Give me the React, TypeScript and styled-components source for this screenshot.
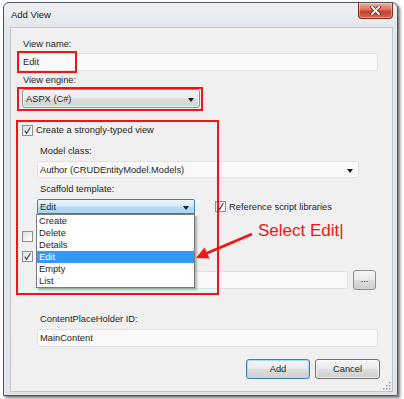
import React from "react";
import styled, { createGlobalStyle, css } from "styled-components";

const GlobalStyle = createGlobalStyle`
  html, body { margin: 0; padding: 0; background: #ffffff; }
  body { font-family: "Liberation Sans", Arial, sans-serif; }
  * { box-sizing: border-box; }
`;

const UI_FONT = `"Liberation Sans", Arial, sans-serif`;
const RED = "#f41414";

const Desktop = styled.div`
  width: 404px;
  height: 399px;
  padding: 2px 0 0 3px;
  overflow: hidden;
  background: #ffffff;
`;

const Window = styled.div`
  width: 395px;
  height: 394px;
  display: flex;
  flex-direction: column;
  border: 1px solid #50555c;
  border-radius: 6px 6px 0 0;
  background: linear-gradient(180deg, #eef1f4 0px, #e4e8ec 24px, #e1e5ea 100%);
  box-shadow: 2px 2px 3px rgba(0, 0, 0, 0.55);
`;

const TitleBar = styled.div`
  height: 24px;
  flex: none;
  display: flex;
  align-items: flex-start;
  justify-content: space-between;
  padding: 0 4px 0 7px;
`;

const Title = styled.span`
  font-family: ${UI_FONT};
  font-size: 9.5px;
  line-height: 24px;
  color: #1a1a1a;
`;

const CloseButton = styled.div`
  width: 35px;
  height: 16px;
  display: flex;
  align-items: center;
  justify-content: center;
  border: 1px solid #7a3020;
  border-top: none;
  border-radius: 0 0 4px 4px;
  background: linear-gradient(180deg, #eab3a4 0%, #d8735c 45%, #c4402a 55%, #d9644a 100%);
  box-shadow: inset 0 0 0 1px rgba(255, 255, 255, 0.35);
`;

const Client = styled.div`
  position: relative;
  flex: 1;
  margin: 0 4px 3px 6px;
  padding: 9px 14px 0 7px;
  border: 1px solid #bcc5ce;
  background: #f0f0f0;
  font-family: ${UI_FONT};
  font-size: 9.3px;
  color: #1e1e1e;
  display: flex;
  flex-direction: column;
`;

const Label = styled.div<{ $top?: number }>`
  height: 14px;
  line-height: 14px;
  padding-left: 5px;
  margin-top: ${(p) => p.$top ?? 0}px;
  white-space: nowrap;
`;

const IndentLabel = styled(Label)`
  padding-left: 3px;
`;

const TextBox = styled.div<{ $top?: number; $width?: number }>`
  height: 18px;
  line-height: 16px;
  margin-top: ${(p) => p.$top ?? 0}px;
  width: ${(p) => (p.$width ? `${p.$width}px` : "auto")};
  padding-left: 4px;
  border: 1px solid #dfe1e4;
  border-radius: 2px;
  background: #f9f9f9;
  white-space: nowrap;
`;

const IndentTextBox = styled(TextBox)`
  padding-left: 2px;
`;

type ComboVariant = "button" | "flat" | "focused";

const comboVariants: Record<ComboVariant, ReturnType<typeof css>> = {
  button: css`
    border: 1px solid #8b8c8d;
    border-radius: 3px;
    background: linear-gradient(180deg, #f4f4f4 0%, #ebebeb 48%, #dddddd 52%, #d2d2d2 100%);
    box-shadow: inset 0 0 0 1px rgba(255, 255, 255, 0.7);
    padding-left: 3px;
  `,
  flat: css`
    border: 1px solid #dfe1e4;
    border-radius: 2px;
    background: #f9f9f9;
    padding-left: 2px;
  `,
  focused: css`
    border: 1px solid #3c7fb1;
    border-radius: 2px 2px 0 0;
    background: linear-gradient(180deg, #eef7fe 0%, #d6ecfb 45%, #b5dcf6 55%, #a9d5f3 100%);
    padding-left: 2px;
  `,
};

const Combo = styled.div<{ $variant: ComboVariant; $width: number; $height: number; $top?: number; $left?: number }>`
  position: relative;
  display: flex;
  align-items: center;
  flex: none;
  width: ${(p) => p.$width}px;
  height: ${(p) => p.$height}px;
  margin-top: ${(p) => p.$top ?? 0}px;
  margin-left: ${(p) => p.$left ?? 0}px;
  white-space: nowrap;
  ${(p) => comboVariants[p.$variant]}
`;

const DropArrow = styled.span`
  position: absolute;
  right: 5px;
  top: 50%;
  margin-top: -1px;
  width: 0;
  height: 0;
  border-left: 3.5px solid transparent;
  border-right: 3.5px solid transparent;
  border-top: 4px solid #1a1a1a;
`;

const CheckRow = styled.div<{ $top?: number; $left?: number }>`
  display: flex;
  align-items: center;
  gap: 3px;
  height: 14px;
  margin-top: ${(p) => p.$top ?? 0}px;
  margin-left: ${(p) => p.$left ?? 0}px;
  white-space: nowrap;
`;

const CheckBoxFrame = styled.span`
  width: 11px;
  height: 11px;
  flex: none;
  display: flex;
  align-items: center;
  justify-content: center;
  border: 1px solid #8e8f90;
  background: linear-gradient(135deg, #d9dcdf 0%, #f4f4f4 60%, #ffffff 100%);
`;

const CheckBox: React.FC<{ checked?: boolean }> = ({ checked }) => (
  <CheckBoxFrame>
    {checked && (
      <svg width="9" height="9" viewBox="0 0 9 9">
        <path d="M1.8 4.6 L3.6 7.4 L7.4 1.2" fill="none" stroke="#2c3f6b" strokeWidth="1.1" />
      </svg>
    )}
  </CheckBoxFrame>
);

const HiddenMark = styled.span`
  width: 2px;
  height: 6px;
  background: #b07a40;
  opacity: 0.7;
`;

const Indented = styled.div`
  margin-left: 19px;
  display: flex;
  flex-direction: column;
`;

const ScaffoldRow = styled.div`
  position: relative;
  display: flex;
  align-items: center;
  margin-top: 3px;
  gap: 20px;
  z-index: 2;
`;

const ScaffoldCombo = styled.div`
  position: relative;
`;

const DropList = styled.div`
  position: absolute;
  left: -1px;
  top: 100%;
  width: 159px;
  height: 74px;
  background: #ffffff;
  border: 1px solid #7a7a7a;
  box-shadow: 2px 2px 2px rgba(0, 0, 0, 0.28);
  display: flex;
  flex-direction: column;
`;

const DropItem = styled.div<{ $selected?: boolean }>`
  height: 12px;
  line-height: 12px;
  padding-left: 2px;
  background: ${(p) => (p.$selected ? "#3399ff" : "transparent")};
  color: ${(p) => (p.$selected ? "#ffffff" : "#1e1e1e")};
`;

const BrowseRow = styled.div`
  display: flex;
  align-items: center;
  gap: 5px;
  height: 20px;
  margin-top: 7px;
`;

const BrowseButton = styled.div`
  width: 23px;
  height: 20px;
  display: flex;
  align-items: center;
  justify-content: center;
  border: 1px solid #8e8f90;
  border-radius: 3px;
  background: linear-gradient(180deg, #f4f4f4 0%, #ebebeb 48%, #dddddd 52%, #d0d0d0 100%);
  font-size: 9px;
  padding-bottom: 3px;
`;

const ButtonRow = styled.div`
  display: flex;
  justify-content: flex-end;
  gap: 5px;
  margin-top: 12px;
  margin-right: -2px;
`;

const DialogButton = styled.div<{ $default?: boolean; $width: number }>`
  width: ${(p) => p.$width}px;
  height: 20px;
  display: flex;
  align-items: center;
  justify-content: center;
  border-radius: 3px;
  border: 1px solid ${(p) => (p.$default ? "#3c7fb1" : "#707070")};
  background: linear-gradient(180deg, #f4f4f4 0%, #ebebeb 48%, #dddddd 52%, #cfcfcf 100%);
  box-shadow: ${(p) => (p.$default ? "inset 0 0 0 1px #a6dbf6" : "inset 0 0 0 1px rgba(255,255,255,0.7)")};
`;

const RedBox = styled.div<{ $left: number; $top: number; $w: number; $h: number }>`
  position: absolute;
  left: ${(p) => p.$left}px;
  top: ${(p) => p.$top}px;
  width: ${(p) => p.$w}px;
  height: ${(p) => p.$h}px;
  border: 2px solid ${RED};
  pointer-events: none;
  z-index: 5;
`;

const Callout = styled.div`
  position: absolute;
  left: 247px;
  top: 193px;
  font-family: "Liberation Sans", Arial, sans-serif;
  font-size: 17px;
  line-height: 20px;
  color: ${RED};
  white-space: nowrap;
  z-index: 6;
`;

const ArrowSvg = styled.svg`
  position: absolute;
  left: 180px;
  top: 195px;
  z-index: 6;
  overflow: visible;
`;

const Grip = styled.svg`
  position: absolute;
  right: 1px;
  bottom: 1px;
`;

export default function App() {
  return (
    <>
      <GlobalStyle />
      <Desktop>
        <Window>
          <TitleBar>
            <Title>Add View</Title>
            <CloseButton>
              <svg width="11" height="9" viewBox="0 0 11 9">
                <path d="M2 1 L9 8 M9 1 L2 8" stroke="#5a2216" strokeWidth="3.4" strokeLinecap="square" />
                <path d="M2 1 L9 8 M9 1 L2 8" stroke="#ffffff" strokeWidth="1.8" strokeLinecap="square" />
              </svg>
            </CloseButton>
          </TitleBar>
          <Client>
            <Label>View name:</Label>
            <TextBox $top={2}>Edit</TextBox>
            <Label $top={2}>View engine:</Label>
            <Combo $variant="button" $width={178} $height={19} $top={2} $left={4}>
              ASPX (C#)
              <DropArrow />
            </Combo>
            <CheckRow $top={15} $left={4}>
              <CheckBox checked />
              Create a strongly-typed view
            </CheckRow>
            <Indented>
              <IndentLabel $top={7}>Model class:</IndentLabel>
              <Combo $variant="flat" $width={322} $height={17} $top={3}>
                Author (CRUDEntityModel.Models)
                <DropArrow />
              </Combo>
              <IndentLabel $top={4}>Scaffold template:</IndentLabel>
              <ScaffoldRow>
                <ScaffoldCombo>
                  <Combo $variant="focused" $width={158} $height={15}>
                    Edit
                    <DropArrow />
                  </Combo>
                  <DropList>
                    <DropItem>Create</DropItem>
                    <DropItem>Delete</DropItem>
                    <DropItem>Details</DropItem>
                    <DropItem $selected>Edit</DropItem>
                    <DropItem>Empty</DropItem>
                    <DropItem>List</DropItem>
                  </DropList>
                </ScaffoldCombo>
                <CheckRow>
                  <CheckBox checked />
                  Reference script libraries
                </CheckRow>
              </ScaffoldRow>
            </Indented>
            <CheckRow $top={15} $left={4}>
              <CheckBox />
              <HiddenMark />
            </CheckRow>
            <CheckRow $top={6} $left={4}>
              <CheckBox checked />
              <HiddenMark />
            </CheckRow>
            <Indented>
              <BrowseRow>
                <IndentTextBox $width={311} />
                <BrowseButton>...</BrowseButton>
              </BrowseRow>
              <IndentLabel $top={22}>ContentPlaceHolder ID:</IndentLabel>
              <IndentTextBox $top={3}>MainContent</IndentTextBox>
            </Indented>
            <ButtonRow>
              <DialogButton $default $width={64}>Add</DialogButton>
              <DialogButton $width={65}>Cancel</DialogButton>
            </ButtonRow>

            <RedBox $left={6} $top={23} $w={60} $h={22} />
            <RedBox $left={6} $top={59} $w={186} $h={24} />
            <RedBox $left={5} $top={92} $w={203} $h={175} />
            <Callout>Select Edit|</Callout>
            <ArrowSvg width="70" height="45" viewBox="0 0 70 45">
              <line x1="61" y1="11" x2="14" y2="31" stroke={RED} strokeWidth="2.6" />
              <polygon points="5,35 18.5,35.5 13.5,24.5" fill={RED} />
            </ArrowSvg>
            <Grip width="9" height="9" viewBox="0 0 9 9">
              <g fill="#9aa3ad">
                <rect x="7" y="1" width="1.5" height="1.5" />
                <rect x="4" y="4" width="1.5" height="1.5" />
                <rect x="7" y="4" width="1.5" height="1.5" />
                <rect x="1" y="7" width="1.5" height="1.5" />
                <rect x="4" y="7" width="1.5" height="1.5" />
                <rect x="7" y="7" width="1.5" height="1.5" />
              </g>
            </Grip>
          </Client>
        </Window>
      </Desktop>
    </>
  );
}
